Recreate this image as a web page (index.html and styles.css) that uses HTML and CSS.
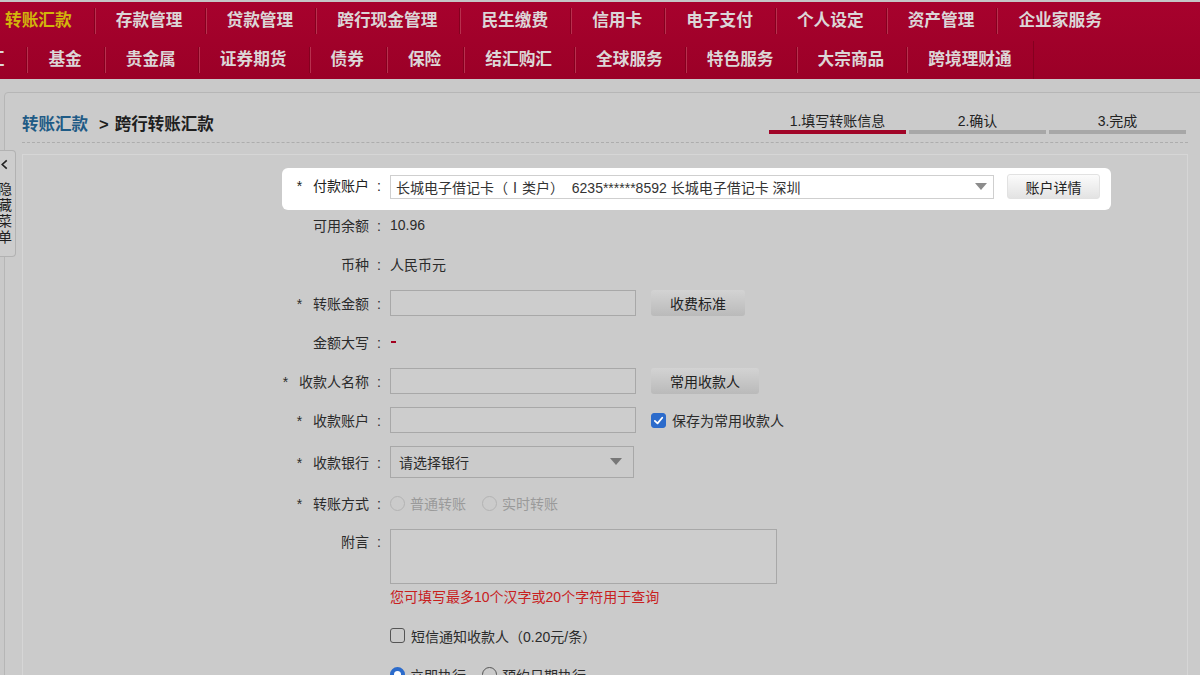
FILE: index.html
```html
<!DOCTYPE html>
<html lang="zh-CN">
<head>
    <meta charset="UTF-8">
    <meta name="viewport" content="width=device-width, initial-scale=1.0">
    <title>跨行转账汇款</title>
    <link rel="stylesheet" href="styles.css">
</head>
<body>
    <header class="topnav">
        <ul class="nav-row nav-main">
            <li class="active">转账汇款</li>
            <li>存款管理</li>
            <li>贷款管理</li>
            <li>跨行现金管理</li>
            <li>民生缴费</li>
            <li>信用卡</li>
            <li>电子支付</li>
            <li>个人设定</li>
            <li>资产管理</li>
            <li>企业家服务</li>
        </ul>
        <ul class="nav-row nav-sub">
            <li>外汇</li>
            <li>基金</li>
            <li>贵金属</li>
            <li>证券期货</li>
            <li>债券</li>
            <li>保险</li>
            <li>结汇购汇</li>
            <li>全球服务</li>
            <li>特色服务</li>
            <li>大宗商品</li>
            <li class="last">跨境理财通</li>
        </ul>
    </header>

    <div class="side-tab">
        <svg class="side-arrow" viewBox="0 0 10 12" width="9" height="11"><path d="M7.5 1.5 L2.5 6 L7.5 10.5" fill="none" stroke="#222" stroke-width="1.8"/></svg>
        <span>隐</span><span>藏</span><span>菜</span><span>单</span>
    </div>

    <main class="page">
        <div class="page-head">
            <div class="crumbs"><a href="#">转账汇款</a><span class="crumb-sep">&gt;</span>跨行转账汇款</div>
            <ol class="steps">
                <li class="current">1.填写转账信息</li>
                <li>2.确认</li>
                <li>3.完成</li>
            </ol>
        </div>

        <section class="form-box">
            <div class="form">
                <div class="row row-focus">
                    <div class="row-label"><span class="req">*</span>付款账户<span class="colon">:</span></div>
                    <div class="row-field">
                        <div class="select select-account">
                            <span>长城电子借记卡（Ⅰ类户）&nbsp; 6235******8592 长城电子借记卡 深圳</span>
                            <i class="caret"></i>
                        </div>
                        <button class="btn btn-light">账户详情</button>
                    </div>
                </div>

                <div class="row">
                    <div class="row-label">可用余额<span class="colon">:</span></div>
                    <div class="row-field">10.96</div>
                </div>

                <div class="row">
                    <div class="row-label">币种<span class="colon">:</span></div>
                    <div class="row-field">人民币元</div>
                </div>

                <div class="row">
                    <div class="row-label"><span class="req">*</span>转账金额<span class="colon">:</span></div>
                    <div class="row-field">
                        <input type="text" class="input">
                        <button class="btn">收费标准</button>
                    </div>
                </div>

                <div class="row">
                    <div class="row-label">金额大写<span class="colon">:</span></div>
                    <div class="row-field"><span class="dash"></span></div>
                </div>

                <div class="row">
                    <div class="row-label"><span class="req">*</span>收款人名称<span class="colon">:</span></div>
                    <div class="row-field">
                        <input type="text" class="input">
                        <button class="btn">常用收款人</button>
                    </div>
                </div>

                <div class="row">
                    <div class="row-label"><span class="req">*</span>收款账户<span class="colon">:</span></div>
                    <div class="row-field">
                        <input type="text" class="input">
                        <label class="check check-save">
                            <span class="box checked">
                                <svg viewBox="0 0 16 16" width="13" height="13"><path d="M3.5 8.5 L6.8 11.6 L12.6 4.6" fill="none" stroke="#fff" stroke-width="2.2" stroke-linecap="round" stroke-linejoin="round"/></svg>
                            </span>保存为常用收款人
                        </label>
                    </div>
                </div>

                <div class="row row-bank">
                    <div class="row-label"><span class="req">*</span>收款银行<span class="colon">:</span></div>
                    <div class="row-field">
                        <div class="select select-bank">
                            <span>请选择银行</span>
                            <i class="caret"></i>
                        </div>
                    </div>
                </div>

                <div class="row">
                    <div class="row-label"><span class="req">*</span>转账方式<span class="colon">:</span></div>
                    <div class="row-field">
                        <label class="radio disabled"><span class="dot"></span>普通转账</label>
                        <label class="radio disabled"><span class="dot"></span>实时转账</label>
                    </div>
                </div>

                <div class="row row-memo">
                    <div class="row-label">附言<span class="colon">:</span></div>
                    <div class="row-field">
                        <textarea class="textarea"></textarea>
                    </div>
                </div>

                <p class="hint">您可填写最多10个汉字或20个字符用于查询</p>

                <div class="row row-sms">
                    <div class="row-label"></div>
                    <div class="row-field">
                        <label class="check"><span class="box"></span>短信通知收款人（0.20元/条）</label>
                    </div>
                </div>

                <div class="row">
                    <div class="row-label"></div>
                    <div class="row-field">
                        <label class="radio"><span class="dot on"></span>立即执行</label>
                        <label class="radio"><span class="dot"></span>预约日期执行</label>
                    </div>
                </div>
            </div>
        </section>
    </main>
</body>
</html>
```

FILE: styles.css
```css
html, body {
    width: 1200px;
    height: 675px;
    overflow: hidden;
}
body {
    margin: 0;
    background-color: #c9c9c9;
    font-family: "Liberation Sans", "Noto Sans CJK SC", sans-serif;
    color: #2b2b2b;
    position: relative;
}

/* top navigation */
.topnav {
    border-top: 2px solid #c6c6c6;
    background: linear-gradient(#a7022d, #9b0027);
    overflow: hidden;
}
.nav-row {
    display: flex;
    list-style: none;
    margin: 0;
    padding: 0;
    height: 38px;
    align-items: center;
    white-space: nowrap;
}
.nav-main {
    margin-left: -17px;
    padding-bottom: 1px;
}
.nav-sub {
    margin-left: -51px;
}
.nav-row li {
    font-size: 16.7px;
    font-weight: bold;
    color: #dcd6d7;
    padding: 0 22px;
    line-height: 38px;
    background-image: linear-gradient(to right, #85001f 0, #85001f 1px, #b8304e 1px, #b8304e 2px);
    background-size: 2px 26px;
    background-position: left center;
    background-repeat: no-repeat;
}
.nav-row li:first-child {
    background-image: none;
}
.nav-row li.active {
    color: #d2b40c;
}
.nav-row li.last {
    box-shadow: inset -1px 0 0 #85001f;
}

/* hide menu tab */
.side-tab {
    position: absolute;
    left: 0;
    top: 150px;
    width: 15px;
    height: 105px;
    border: 1px solid #b2b2b2;
    border-left: none;
    border-radius: 0 4px 4px 0;
    background: #cdcdcd;
    overflow: hidden;
    display: flex;
    flex-direction: column;
    align-items: flex-start;
    font-size: 14px;
    line-height: 16px;
    color: #1e1e1e;
    z-index: 2;
}
.side-tab span {
    margin-left: -2px;
}
.side-arrow {
    margin: 8px 0 11px 0;
}

/* page panel */
.page {
    display: block;
    margin: 13px 0 0 4px;
    width: 1166px;
    padding: 0 18px 0 17px;
    border: 1px solid #b6b6b6;
    border-radius: 4px;
    background: #cbcbcb;
    height: 700px;
}
.page-head {
    display: flex;
    justify-content: space-between;
    align-items: flex-end;
    height: 50px;
    box-sizing: border-box;
    border-bottom: 1px dashed #adadad;
}
.crumbs {
    font-size: 16.5px;
    font-weight: bold;
    line-height: 22px;
    margin-bottom: 7px;
    color: #1e1e1e;
}
.crumbs a {
    color: #1f5b86;
    text-decoration: none;
}
.crumb-sep {
    margin: 0 6px 0 11px;
}
.steps {
    display: flex;
    gap: 3px;
    list-style: none;
    margin: 0 2px 8px 0;
    padding: 0;
}
.steps li {
    width: 137px;
    text-align: center;
    font-size: 14px;
    line-height: 18px;
    color: #222;
    border-bottom: 4px solid #a7a7a7;
}
.steps li.current {
    border-bottom-color: #a10528;
}

.form-box {
    margin-top: 11px;
    border: 1px solid #d6d6d6;
    height: 600px;
    padding-top: 13px;
}
.form {
    margin-left: 259px;
}

/* form rows */
.row {
    display: flex;
    align-items: center;
    height: 39px;
    font-size: 14px;
    color: #2b2b2b;
}
.row-label {
    width: 100px;
    flex-shrink: 0;
    text-align: right;
    white-space: nowrap;
}
.req {
    margin-right: 11px;
}
.colon {
    margin-left: 8px;
    margin-right: 1px;
}
.row-field {
    margin-left: 8px;
    display: flex;
    align-items: center;
    white-space: nowrap;
}
.row-focus {
    width: 829px;
    height: 42px;
    box-sizing: border-box;
    padding-top: 6px;
    align-items: flex-start;
    background: #fff;
    border-radius: 6px;
    margin-bottom: -4.5px;
}
.row-focus .row-label {
    line-height: 24px;
    color: #222;
}
.row-bank {
    height: 44px;
}
.row-memo {
    height: auto;
    align-items: flex-start;
    padding-top: 6.5px;
}
.row-memo .row-label {
    line-height: 26px;
}
.row-sms {
    margin-top: 9px;
}

.select {
    display: flex;
    align-items: center;
    justify-content: space-between;
    box-sizing: border-box;
    color: #2b2b2b;
}
.select-account {
    width: 604px;
    height: 24px;
    border: 1px solid #cfcfcf;
    background: #fff;
    padding: 0 6px 0 5px;
    color: #333;
}
.select-bank {
    width: 244px;
    height: 32px;
    border: 1px solid #a8a8a8;
    padding: 0 11px 0 8px;
}
.caret {
    width: 0;
    height: 0;
    border-left: 6px solid transparent;
    border-right: 6px solid transparent;
    border-top: 7px solid #8c8c8c;
}
.select-bank .caret {
    border-top-color: #777;
}

.input {
    width: 246px;
    height: 26px;
    box-sizing: border-box;
    border: 1px solid #a8a8a8;
    background: #cdcdcd;
    margin: 0;
}
.textarea {
    width: 387px;
    height: 55px;
    box-sizing: border-box;
    border: 1px solid #a8a8a8;
    background: #cdcdcd;
    margin: 0;
    resize: none;
}

.btn {
    margin-left: 15px;
    height: 26px;
    padding: 0 19px;
    border: none;
    border-radius: 3px;
    background: linear-gradient(#d3d3d3, #bababa);
    font-family: inherit;
    font-size: 14px;
    color: #222;
}
.btn-light {
    margin-left: 13px;
    width: 93px;
    height: 25px;
    padding: 0;
    border: 1px solid #e2e2e2;
    background: linear-gradient(#fbfbfb, #e3e3e3);
    color: #222;
}

.dash {
    display: inline-block;
    width: 5px;
    height: 2px;
    background: #a3001f;
    margin-left: 1px;
}

.check, .radio {
    display: flex;
    align-items: center;
    color: #2b2b2b;
}
.check-save {
    margin-left: 15px;
}
.box {
    width: 15px;
    height: 15px;
    box-sizing: border-box;
    border: 1px solid #555;
    border-radius: 3px;
    margin-right: 6px;
    display: flex;
    align-items: center;
    justify-content: center;
}
.box.checked {
    background: #2c6bcb;
    border-color: #2c6bcb;
}
.radio + .radio {
    margin-left: 16px;
}
.dot {
    width: 15px;
    height: 15px;
    box-sizing: border-box;
    border: 1px solid #555;
    border-radius: 50%;
    margin-right: 5px;
}
.dot.on {
    border: 4px solid #2c6bcb;
    background: #fff;
}
.radio.disabled {
    color: #9a9a9a;
}
.radio.disabled .dot {
    border-color: #b3b3b3;
}

.hint {
    margin: 3px 0 0 108px;
    font-size: 14px;
    line-height: 20px;
    color: #c8201e;
}
```
